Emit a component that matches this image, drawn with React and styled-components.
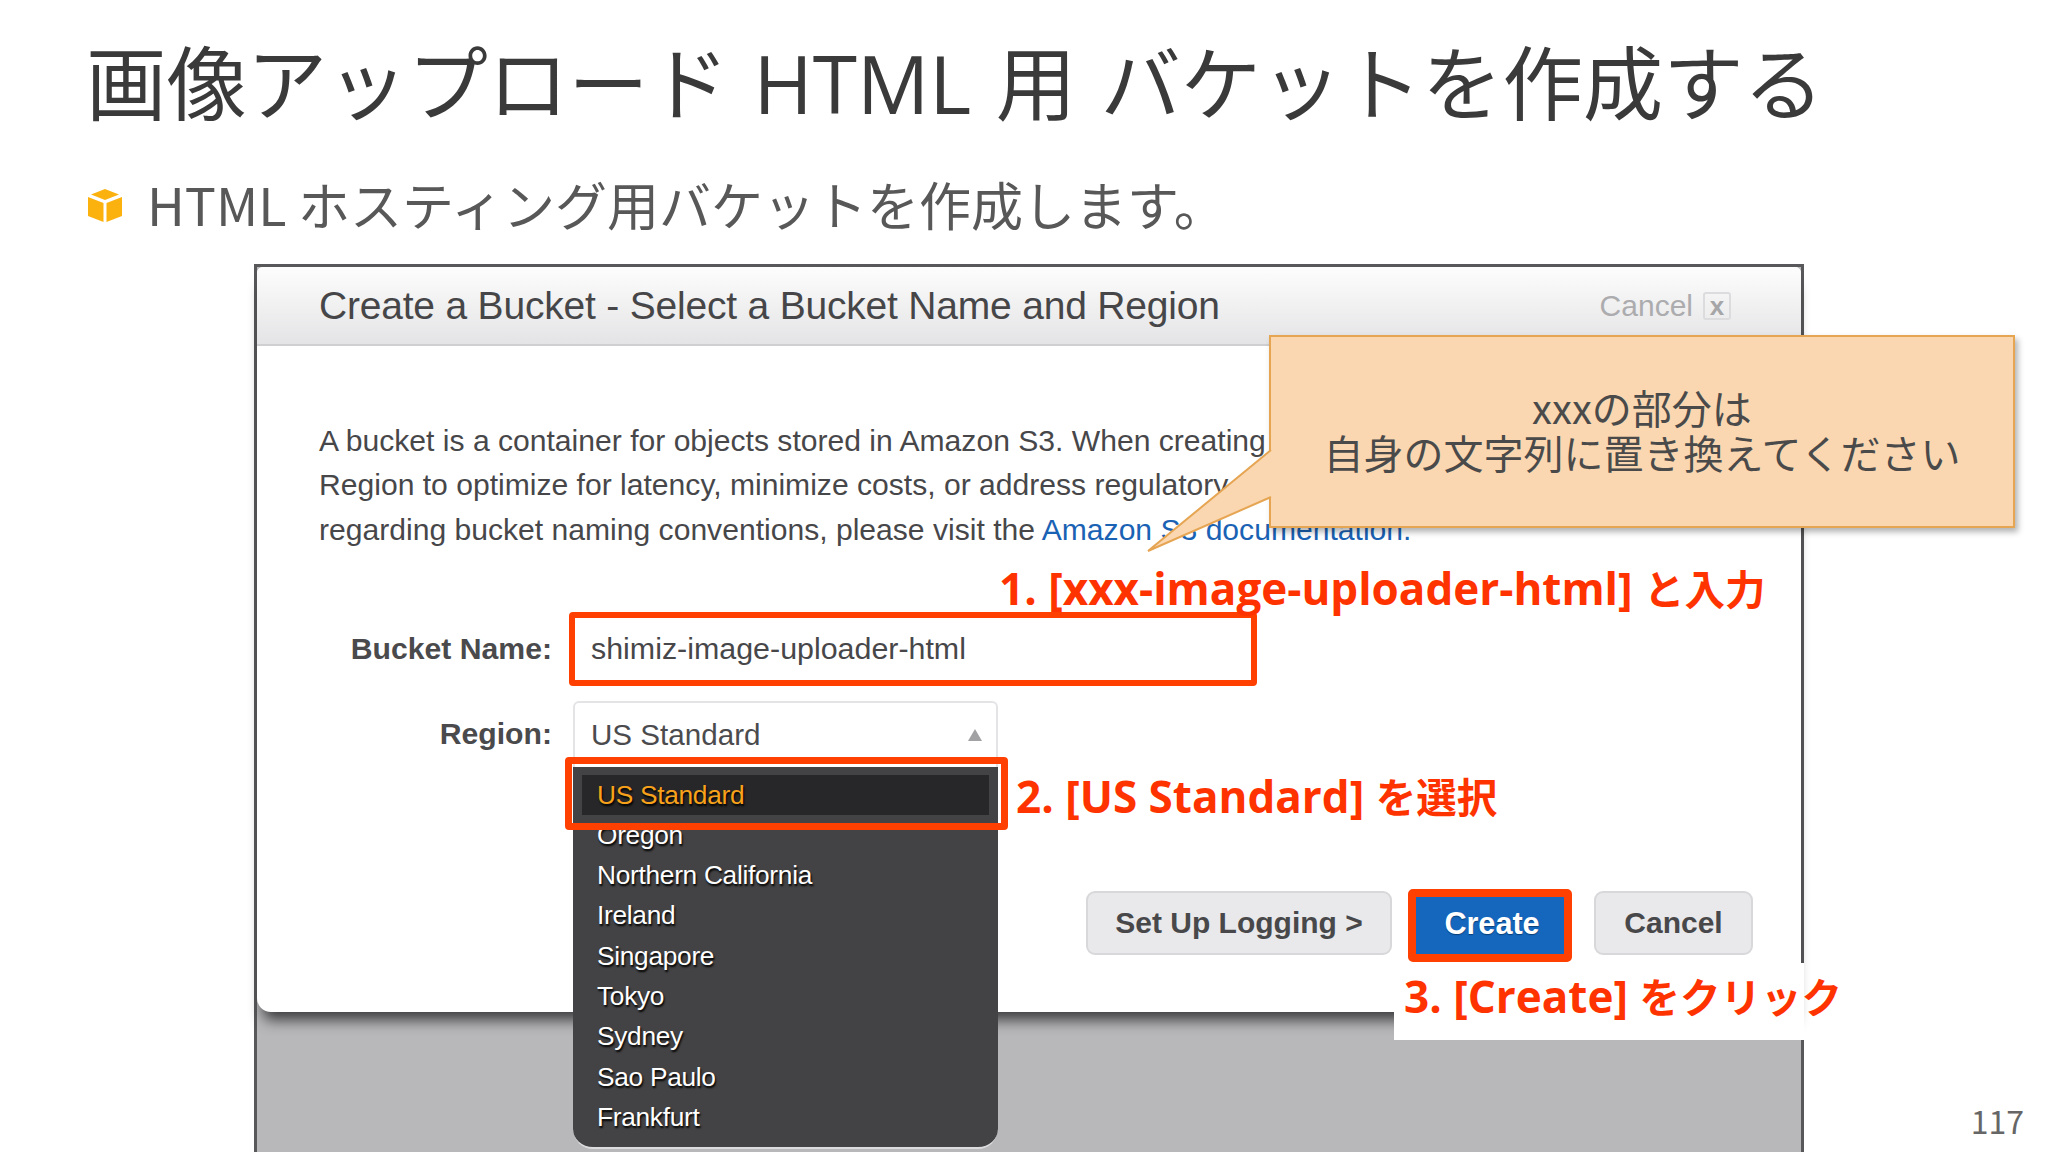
import React from "react";
import styled, { createGlobalStyle } from "styled-components";

const GlobalStyle = createGlobalStyle`
  html, body {
    margin: 0;
    padding: 0;
    background: #fff;
  }
`;

const Slide = styled.div`
  position: relative;
  width: 2048px;
  height: 1152px;
  overflow: hidden;
  background: #fff;
  display: flex;
  flex-direction: column;
  font-family: "Noto Sans CJK JP", sans-serif;
`;

const Title = styled.h1`
  margin: 0;
  padding: 28px 0 0 86px;
  font-family: "Open Sans", "Noto Sans CJK JP", sans-serif;
  font-size: 80.4px;
  line-height: 110px;
  word-spacing: 3.5px;
  font-weight: 400;
  color: #3a3a3a;
  white-space: nowrap;
`;

const Bullet = styled.div`
  display: flex;
  align-items: center;
  height: 90px;
  margin-top: 20px;
  padding-left: 88px;
  font-size: 52px;
  color: #585858;
  white-space: nowrap;
  svg {
    margin-right: 25px;
    margin-top: 4px;
  }
`;

const Frame = styled.div`
  margin: 16px 0 0 254px;
  width: 1550px;
  flex: 1;
  box-sizing: border-box;
  border: 3px solid #58585a;
  border-bottom: none;
  background: #b8b7b9;
  font-family: "Liberation Sans", Arial, sans-serif;
`;

const Window = styled.div`
  height: 745px;
  background: #fff;
  border-radius: 6px 6px 0 14px;
  box-shadow: 0 14px 14px -6px rgba(30, 30, 32, 0.8);
  position: relative;
`;

const Header = styled.div`
  height: 79px;
  box-sizing: border-box;
  display: flex;
  align-items: center;
  justify-content: space-between;
  padding: 0 70px 0 62px;
  background: linear-gradient(#fdfdfd, #e4e4e6);
  border-bottom: 2px solid #cfcfd1;
  border-radius: 6px 6px 0 0;
`;

const HeaderTitle = styled.div`
  font-size: 39px;
  color: #464648;
  letter-spacing: -0.2px;
`;

const HeaderCancel = styled.div`
  display: flex;
  align-items: center;
  gap: 10px;
  font-size: 30px;
  color: #acacae;
`;

const CloseBox = styled.span`
  width: 28px;
  height: 28px;
  box-sizing: border-box;
  border: 2px solid #dcdcde;
  border-radius: 3px;
  display: flex;
  align-items: center;
  justify-content: center;
  font-size: 26px;
  line-height: 22px;
  font-weight: 700;
  color: #a6a6a8;
`;

const Intro = styled.div`
  padding: 73px 0 0 62px;
  font-size: 30.1px;
  line-height: 44.4px;
  color: #47474a;
  white-space: nowrap;
`;

const Link = styled.span`
  color: #1a62b4;
`;

const Form = styled.div`
  margin-top: 60px;
  display: grid;
  grid-template-columns: 295px auto;
  column-gap: 17px;
  row-gap: 15px;
  justify-content: start;
  align-items: center;
`;

const Label = styled.div`
  text-align: right;
  font-size: 30.2px;
  font-weight: 700;
  color: #4a4a4c;
`;

const NameInput = styled.div`
  width: 688px;
  height: 74px;
  box-sizing: border-box;
  border: 6px solid #ff4000;
  border-radius: 4px;
  padding: 0 0 2px 16px;
  display: flex;
  align-items: center;
  font-size: 30.4px;
  color: #47474a;
`;

const Select = styled.div`
  position: relative;
  width: 425px;
  height: 66px;
  margin-left: 4px;
  box-sizing: border-box;
  border: 2px solid #e4e4e6;
  border-bottom: none;
  border-radius: 6px 6px 0 0;
  padding: 0 16px;
  display: flex;
  align-items: center;
  justify-content: space-between;
  font-size: 29.6px;
  color: #4b4b4e;
`;

const Caret = styled.span`
  width: 0;
  height: 0;
  border-left: 7px solid transparent;
  border-right: 7px solid transparent;
  border-bottom: 12px solid #a2a2a4;
  margin-right: -2px;
`;

const Menu = styled.div`
  position: absolute;
  left: -2px;
  top: 64px;
  width: 425px;
  height: 382px;
  box-sizing: border-box;
  padding: 8px 9px 0;
  background: #434244;
  border-bottom: 2px solid #dcdcde;
  border-radius: 0 0 20px 20px;
  z-index: 2;
`;

const MenuItem = styled.div`
  height: ${(p) => (p.$selected ? "40px" : "40.3px")};
  padding-left: 15px;
  display: flex;
  align-items: center;
  font-size: 26.3px;
  letter-spacing: -0.3px;
  color: ${(p) => (p.$selected ? "#f8a21b" : "#fff")};
  background: ${(p) => (p.$selected ? "#272628" : "transparent")};
  text-shadow: 1px 2px 2px #000;
`;

const MenuHighlight = styled.div`
  position: absolute;
  left: -10px;
  top: 54px;
  width: 443px;
  height: 73px;
  box-sizing: border-box;
  border: 7px solid #ff4000;
  border-radius: 4px;
  z-index: 3;
`;

const Actions = styled.div`
  margin-top: 122px;
  padding-right: 48px;
  display: flex;
  justify-content: flex-end;
  align-items: flex-start;
  font-size: 30px;
  font-weight: 700;
`;

const GreyButton = styled.div`
  width: ${(p) => p.$width}px;
  height: 64px;
  margin: 2px 0 0 ${(p) => p.$gap}px;
  box-sizing: border-box;
  background: #e9e9eb;
  border: 2px solid #d8d8da;
  border-radius: 9px;
  display: flex;
  align-items: center;
  justify-content: center;
  color: #48484a;
`;

const CreateButton = styled.div`
  width: 164px;
  height: 73px;
  margin-left: 16px;
  padding: 0 0 4px 4px;
  box-sizing: border-box;
  background: #1467bd;
  border: 8px solid #ff4000;
  border-radius: 5px;
  display: flex;
  align-items: center;
  justify-content: center;
  font-size: 30.6px;
  color: #fff;
  text-shadow: 0 1px 1px #0a3f78;
`;

const Note = styled.div`
  position: absolute;
  font-family: "Open Sans", "Noto Sans CJK JP", sans-serif;
  font-weight: 700;
  font-size: 44px;
  line-height: 50px;
  color: #ff3300;
  white-space: nowrap;
  z-index: 4;
`;

const Kana = styled.span`
  font-size: 40.5px;
`;

const NotePatch = styled(Note)`
  background: #fff;
  width: 410px;
  height: 77px;
  padding: 8px 0 0 10px;
  box-sizing: border-box;
`;

const Callout = styled.div`
  position: absolute;
  left: 1269px;
  top: 335px;
  width: 746px;
  height: 193px;
  box-sizing: border-box;
  padding-top: 48px;
  background: #fad7b1;
  border: 2px solid #e6a552;
  box-shadow: 3px 4px 6px rgba(0, 0, 0, 0.3);
  text-align: center;
  font-size: 40px;
  line-height: 44.5px;
  color: #4a4a4a;
  z-index: 5;
`;

const CalloutTail = styled.svg`
  position: absolute;
  left: 1146px;
  top: 448px;
  z-index: 6;
`;

const PageNumber = styled.div`
  position: absolute;
  right: 24px;
  bottom: 12px;
  font-size: 32px;
  line-height: 40px;
  color: #666;
`;

const CubeIcon = () => (
  <svg width="34" height="33" viewBox="0 0 34 33">
    <path d="M17 0L31 5.5L17 11L3 5.5Z" fill="#fbb20f" />
    <path d="M0 8L15.5 14V33L0 27Z" fill="#fbb20f" />
    <path d="M34 8L18.5 14V33L34 27Z" fill="#fbb20f" />
  </svg>
);

const regions = ["Oregon", "Northern California", "Ireland", "Singapore", "Tokyo", "Sydney", "Sao Paulo", "Frankfurt"];

export default function App() {
  return (
    <Slide>
      <GlobalStyle />
      <Title>画像アップロード HTML 用 バケットを作成する</Title>
      <Bullet>
        <CubeIcon />
        HTML ホスティング用バケットを作成します。
      </Bullet>
      <Frame>
        <Window>
          <Header>
            <HeaderTitle>Create a Bucket - Select a Bucket Name and Region</HeaderTitle>
            <HeaderCancel>
              Cancel <CloseBox>x</CloseBox>
            </HeaderCancel>
          </Header>
          <Intro>
            A bucket is a container for objects stored in Amazon S3. When creating
            <br />
            Region to optimize for latency, minimize costs, or address regulatory
            <br />
            regarding bucket naming conventions, please visit the <Link>Amazon S3 documentation.</Link>
          </Intro>
          <Form>
            <Label>Bucket Name:</Label>
            <NameInput>shimiz-image-uploader-html</NameInput>
            <Label>Region:</Label>
            <Select>
              US Standard
              <Caret />
              <Menu>
                <MenuItem $selected>US Standard</MenuItem>
                {regions.map((r) => (
                  <MenuItem key={r}>{r}</MenuItem>
                ))}
              </Menu>
              <MenuHighlight />
            </Select>
          </Form>
          <Actions>
            <GreyButton $width={306} $gap={0}>Set Up Logging &gt;</GreyButton>
            <CreateButton>Create</CreateButton>
            <GreyButton $width={159} $gap={22}>Cancel</GreyButton>
          </Actions>
        </Window>
      </Frame>

      <Callout>
        xxxの部分は
        <br />
        自身の文字列に置き換えてください
      </Callout>
      <CalloutTail width="128" height="106" viewBox="0 0 128 106">
        <path d="M125 2L2 103L125 49Z" fill="#fad7b1" />
        <path d="M125 2L2 103L125 49" fill="none" stroke="#e6a552" strokeWidth="2" />
      </CalloutTail>
      <Note style={{ left: 999, top: 563 }}>1. [xxx-image-uploader-html] <Kana>と入力</Kana></Note>
      <Note style={{ left: 1016, top: 771 }}>2. [US Standard] <Kana>を選択</Kana></Note>
      <NotePatch style={{ left: 1394, top: 963 }}>3. [Create] <Kana>をクリック</Kana></NotePatch>
      <PageNumber>117</PageNumber>
    </Slide>
  );
}
